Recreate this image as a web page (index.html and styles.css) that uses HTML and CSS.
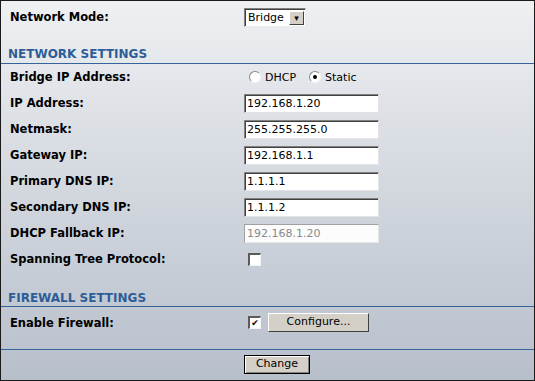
FILE: index.html
```html
<!DOCTYPE html>
<html>
<head>
    <title>Network</title>
    <meta charset="utf-8">
    <link rel="stylesheet" href="styles.css">
</head>
<body>
    <div class="panel">
        <div class="row top-row">
            <span class="label">Network Mode:</span>
            <span class="select"><span class="select-text">Bridge</span><span class="select-btn">&#9662;</span></span>
        </div>

        <h2 class="section-title net-title">NETWORK SETTINGS</h2>
        <div class="row">
            <span class="label">Bridge IP Address:</span>
            <span class="radios">
                <span class="radio"></span><span class="radio-text">DHCP</span>
                <span class="radio checked"></span><span class="radio-text">Static</span>
            </span>
        </div>
        <div class="row">
            <span class="label">IP Address:</span>
            <span class="field">192.168.1.20</span>
        </div>
        <div class="row">
            <span class="label">Netmask:</span>
            <span class="field">255.255.255.0</span>
        </div>
        <div class="row">
            <span class="label">Gateway IP:</span>
            <span class="field">192.168.1.1</span>
        </div>
        <div class="row">
            <span class="label">Primary DNS IP:</span>
            <span class="field">1.1.1.1</span>
        </div>
        <div class="row">
            <span class="label">Secondary DNS IP:</span>
            <span class="field">1.1.1.2</span>
        </div>
        <div class="row">
            <span class="label">DHCP Fallback IP:</span>
            <span class="field disabled">192.168.1.20</span>
        </div>
        <div class="row">
            <span class="label">Spanning Tree Protocol:</span>
            <span class="check"></span>
        </div>

        <h2 class="section-title fw-title">FIREWALL SETTINGS</h2>
        <div class="row fw-row">
            <span class="label">Enable Firewall:</span>
            <span class="inline">
                <span class="check">&#10004;</span>
                <span class="button configure">Configure...</span>
            </span>
        </div>

        <div class="footer">
            <span class="button change">Change</span>
        </div>
    </div>
</body>
</html>
```

FILE: styles.css
```css
body {
    margin: 0;
}

.panel {
    width: 535px;
    height: 381px;
    box-sizing: border-box;
    border: 1px solid #1a1a1a;
    background: linear-gradient(#eef0f2, #b7bfcb);
    font-family: Verdana, "DejaVu Sans", sans-serif;
    font-size: 11px;
    color: #000;
}

.row {
    display: grid;
    grid-template-columns: 234px 1fr;
    align-items: center;
    height: 26px;
    padding-left: 9px;
}

.top-row {
    margin-top: 3px;
}

.label {
    font-weight: bold;
    font-size: 11.5px;
}

.section-title {
    margin: 0;
    padding: 0 0 1px 7px;
    font-size: 12px;
    font-weight: bold;
    color: #2d5d97;
    border-bottom: 1px solid #35639b;
    line-height: 15px;
}

.net-title {
    margin-top: 17px;
}

.fw-title {
    margin-top: 19px;
    padding-bottom: 0;
}

.fw-row {
    height: 27px;
    margin-top: 2px;
    border-bottom: 1px solid #35639b;
    padding-bottom: 13px;
}

.field {
    width: 135px;
    height: 19px;
    box-sizing: border-box;
    border-top: 1px solid #808080;
    border-left: 1px solid #808080;
    border-right: 1px solid #e4e4e4;
    border-bottom: 1px solid #e4e4e4;
    box-shadow: inset 1px 1px 0 #404040;
    background: #fff;
    padding: 2px 0 0 2px;
    line-height: 14px;
    white-space: nowrap;
}

.field.disabled {
    color: #8a8a8a;
    background: #fcfcfc;
    box-shadow: none;
    border-color: #a0a0a0 #e6e6e6 #e6e6e6 #a0a0a0;
}

.select {
    display: flex;
    width: 62px;
    height: 19px;
    box-sizing: border-box;
    border-top: 1px solid #808080;
    border-left: 1px solid #808080;
    border-right: 1px solid #ececec;
    border-bottom: 1px solid #ececec;
    box-shadow: inset 1px 1px 0 #404040;
    background: #fff;
}

.select-text {
    flex: 1;
    padding: 2px 0 0 3px;
    line-height: 14px;
}

.select-btn {
    width: 15px;
    margin: 2px 1px 1px 0;
    box-sizing: border-box;
    background: #d4d0c8;
    border-top: 1px solid #fff;
    border-left: 1px solid #fff;
    border-right: 1px solid #404040;
    border-bottom: 1px solid #404040;
    font-size: 9px;
    line-height: 12px;
    text-align: center;
}

.radios {
    display: flex;
    align-items: center;
    padding-left: 5px;
}

.radio {
    width: 12px;
    height: 12px;
    box-sizing: border-box;
    border-radius: 50%;
    border: 1px solid #888;
    border-right-color: #f4f4f4;
    border-bottom-color: #f4f4f4;
    background: #fff;
    position: relative;
}

.radio.checked::after {
    content: "";
    position: absolute;
    left: 3px;
    top: 3px;
    width: 4px;
    height: 4px;
    border-radius: 50%;
    background: #000;
}

.radio-text {
    margin: 0 13px 0 4px;
}

.check {
    display: inline-block;
    width: 13px;
    height: 13px;
    box-sizing: border-box;
    margin-left: 4px;
    border-top: 2px solid #5a5a5a;
    border-left: 2px solid #5a5a5a;
    border-right: 1px solid #f4f4f4;
    border-bottom: 1px solid #f4f4f4;
    background: #fff;
    font-size: 9px;
    line-height: 10px;
    text-align: center;
    font-weight: bold;
}

.inline {
    display: flex;
    align-items: center;
}

.button {
    display: inline-block;
    height: 19px;
    box-sizing: border-box;
    background: #d4d0c8;
    border-top: 1px solid #fff;
    border-left: 1px solid #fff;
    border-right: 1px solid #404040;
    border-bottom: 1px solid #404040;
    line-height: 16px;
    text-align: center;
    font-size: 11px;
}

.configure {
    width: 101px;
    margin-left: 7px;
}

.footer {
    padding: 5px 0 0 243px;
}

.change {
    width: 66px;
    border: 1px solid #000;
    box-shadow: inset 1px 1px 0 #fff, inset -1px -1px 0 #808080;
}
```
